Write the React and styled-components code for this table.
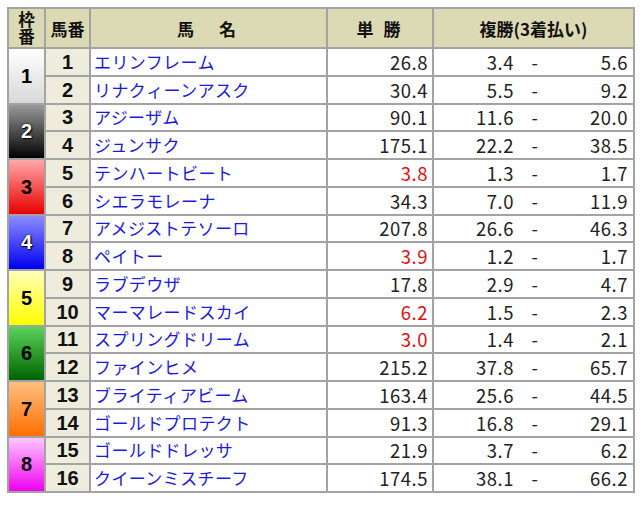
import React from "react";
import styled, { createGlobalStyle } from "styled-components";

const Global = createGlobalStyle`
  html, body { margin: 0; padding: 0; background: #fff; }
  body { font-family: "Noto Sans CJK JP", "Noto Sans", sans-serif; }
`;

const Page = styled.div`
  padding: 7px 0 0 7px;
`;

const Table = styled.table`
  width: 626px;
  border-collapse: collapse;
  table-layout: fixed;
  border: 2px solid #a3a3a3;
`;

const Head = styled.th`
  background: #dcdab4;
  border: 2px solid #a3a3a3;
  height: 38px;
  padding: 0;
  font-size: 17px;
  font-weight: bold;
  color: #111;
  text-align: center;
  line-height: 19px;
  letter-spacing: ${(p) => p.$spacing || "0"};
  white-space: nowrap;
`;

const Vertical = styled.span`
  display: inline-block;
  writing-mode: vertical-rl;
  font-size: 16.5px;
  line-height: 18px;
  letter-spacing: 1px;
  vertical-align: middle;
`;

const Frame = styled.td`
  border: 2px solid #a3a3a3;
  padding: 0;
  text-align: center;
  font-family: "Liberation Sans", Arial, sans-serif;
  font-weight: bold;
  font-size: 20px;
  line-height: 20px;
  color: ${(p) => (p.$light ? "#fff" : "#000")};
  text-shadow: ${(p) => (p.$light ? "0 0 2px #000, 1px 1px 1px #000" : "none")};
  background: linear-gradient(to bottom, ${(p) => p.$top}, ${(p) => p.$bottom});
`;

const Num = styled.td`
  border: 2px solid #a3a3a3;
  height: 25.75px;
  padding: 0;
  background: #eeecdc;
  text-align: center;
  font-family: "Liberation Sans", Arial, sans-serif;
  font-weight: bold;
  font-size: 20px;
  line-height: 20px;
  color: #111;
`;

const Name = styled.td`
  border: 2px solid #a3a3a3;
  padding: 0 0 0 3px;
  font-size: 17px;
  line-height: 20px;
  color: #1a1adf;
  white-space: nowrap;
  overflow: hidden;
  letter-spacing: 0.4px;
`;

const Odds = styled.td`
  border: 2px solid #a3a3a3;
  padding: 0 4px 0 0;
  text-align: right;
  font-size: 18.5px;
  line-height: 20px;
  letter-spacing: 0.5px;
  color: ${(p) => (p.$fav ? "#e01010" : "#222")};
`;

const PlaceCell = styled.td`
  border: 2px solid #a3a3a3;
  padding: 0;
  font-size: 18.5px;
  line-height: 20px;
  letter-spacing: 0.5px;
  color: #222;
`;

const PlaceGrid = styled.div`
  display: grid;
  grid-template-columns: 80px 42px 1fr;
  align-items: center;
`;

const Low = styled.span`
  text-align: right;
`;

const Dash = styled.span`
  text-align: center;
`;

const High = styled.span`
  text-align: right;
  padding-right: 5px;
`;

const frames = [
  { top: "#ffffff", bottom: "#d8d8d8", light: false },
  { top: "#9a9a9a", bottom: "#000000", light: true },
  { top: "#ffa8a8", bottom: "#e80000", light: false },
  { top: "#8c8cff", bottom: "#0000f0", light: true },
  { top: "#ffffb8", bottom: "#ffff00", light: false },
  { top: "#5ad25a", bottom: "#006400", light: false },
  { top: "#ffc080", bottom: "#ff6e00", light: false },
  { top: "#ffc8ff", bottom: "#ee00ee", light: false },
];

const horses = [
  ["エリンフレーム", "26.8", "3.4", "5.6"],
  ["リナクィーンアスク", "30.4", "5.5", "9.2"],
  ["アジーザム", "90.1", "11.6", "20.0"],
  ["ジュンサク", "175.1", "22.2", "38.5"],
  ["テンハートビート", "3.8", "1.3", "1.7", true],
  ["シエラモレーナ", "34.3", "7.0", "11.9"],
  ["アメジストテソーロ", "207.8", "26.6", "46.3"],
  ["ペイトー", "3.9", "1.2", "1.7", true],
  ["ラブデウザ", "17.8", "2.9", "4.7"],
  ["マーマレードスカイ", "6.2", "1.5", "2.3", true],
  ["スプリングドリーム", "3.0", "1.4", "2.1", true],
  ["ファインヒメ", "215.2", "37.8", "65.7"],
  ["ブライティアビーム", "163.4", "25.6", "44.5"],
  ["ゴールドプロテクト", "91.3", "16.8", "29.1"],
  ["ゴールドドレッサ", "21.9", "3.7", "6.2"],
  ["クイーンミスチーフ", "174.5", "38.1", "66.2"],
];

export default function App() {
  return (
    <>
      <Global />
      <Page>
        <Table>
          <colgroup>
            <col style={{ width: 37 }} />
            <col style={{ width: 45 }} />
            <col style={{ width: 237 }} />
            <col style={{ width: 106 }} />
            <col style={{ width: 201 }} />
          </colgroup>
          <thead>
            <tr>
              <Head><Vertical>枠番</Vertical></Head>
              <Head>馬番</Head>
              <Head $spacing="4px">馬　名</Head>
              <Head $spacing="3px">単 勝</Head>
              <Head>複勝(3着払い)</Head>
            </tr>
          </thead>
          <tbody>
            {horses.map((h, i) => {
              const f = frames[Math.floor(i / 2)];
              return (
                <tr key={i}>
                  {i % 2 === 0 && (
                    <Frame rowSpan={2} $top={f.top} $bottom={f.bottom} $light={f.light}>
                      {Math.floor(i / 2) + 1}
                    </Frame>
                  )}
                  <Num>{i + 1}</Num>
                  <Name>{h[0]}</Name>
                  <Odds $fav={h[4]}>{h[1]}</Odds>
                  <PlaceCell>
                    <PlaceGrid>
                      <Low>{h[2]}</Low>
                      <Dash>-</Dash>
                      <High>{h[3]}</High>
                    </PlaceGrid>
                  </PlaceCell>
                </tr>
              );
            })}
          </tbody>
        </Table>
      </Page>
    </>
  );
}
